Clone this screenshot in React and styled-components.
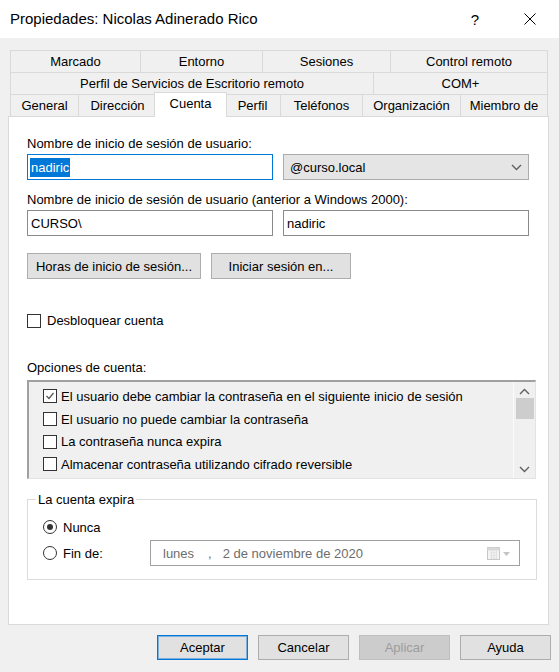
import React from "react";
import styled, { createGlobalStyle } from "styled-components";

const GlobalStyle = createGlobalStyle`
  html, body {
    margin: 0;
    padding: 0;
    background: #f0f0f0;
  }
  body {
    font-family: "Liberation Sans", Arial, sans-serif;
    font-size: 13px;
    color: #000;
  }
`;

const Window = styled.div`
  width: 559px;
  height: 672px;
  display: flex;
  flex-direction: column;
  background: #f0f0f0;
  overflow: hidden;
`;

const TitleBar = styled.div`
  height: 38px;
  flex-shrink: 0;
  background: #fff;
  display: flex;
  align-items: center;
  padding-right: 6px;
`;

const Title = styled.div`
  flex: 1;
  padding-left: 10px;
  font-size: 15px;
  line-height: 18px;
`;

const CaptionButton = styled.div`
  width: 46px;
  height: 38px;
  display: flex;
  align-items: center;
  justify-content: center;
  font-size: 15px;
  margin-right: ${({ $gap }) => $gap || 0}px;
`;

const Body = styled.div`
  flex: 1;
  display: flex;
  flex-direction: column;
  padding: 12px 8px 0 8px;
`;

const TabRow = styled.div`
  display: grid;
  grid-template-columns: ${({ $cols }) => $cols};
  height: 22px;
  margin: 0 4px 0 2px;
  border-left: 1px solid #d9d9d9;
`;

const Tab = styled.div`
  display: flex;
  align-items: center;
  justify-content: center;
  border-top: 1px solid #d9d9d9;
  border-right: 1px solid #d9d9d9;
  background: ${({ $active }) => ($active ? "#fff" : "#f0f0f0")};
  line-height: 15px;
  white-space: nowrap;
  ${({ $active }) =>
    $active &&
    `
    margin: -2px -2px -1px -3px;
    border-left: 1px solid #d9d9d9;
    padding-bottom: 3px;
    z-index: 1;
  `}
`;

const Panel = styled.div`
  box-sizing: border-box;
  height: 509px;
  margin-right: 2px;
  background: #fff;
  border: 1px solid #d9d9d9;
  padding: 0 19px 0 18px;
  display: flex;
  flex-direction: column;
`;

const Label = styled.div`
  line-height: 15px;
  margin-top: ${({ $mt }) => $mt}px;
  margin-bottom: ${({ $mb }) => $mb || 0}px;
`;

const FieldRow = styled.div`
  display: grid;
  grid-template-columns: 246px 246px;
  column-gap: 10px;
`;

const TextBox = styled.div`
  box-sizing: border-box;
  height: 26px;
  border: 1px solid ${({ $focused }) => ($focused ? "#0078d7" : "#8a8a8a")};
  background: #fff;
  display: flex;
  align-items: center;
  padding-left: 2px;
`;

const Selected = styled.span`
  background: #0078d7;
  color: #fff;
  line-height: 19px;
  padding: 0 1px;
`;

const Combo = styled.div`
  box-sizing: border-box;
  height: 26px;
  border: 1px solid #acacac;
  background: #e5e5e5;
  display: flex;
  align-items: center;
  justify-content: space-between;
  padding: 0 6px 0 6px;
`;

const ButtonRow = styled.div`
  display: flex;
  gap: 10px;
  margin-top: ${({ $mt }) => $mt || 0}px;
  justify-content: ${({ $end }) => ($end ? "flex-end" : "flex-start")};
`;

const Button = styled.div`
  box-sizing: border-box;
  width: ${({ $w }) => $w}px;
  height: ${({ $h }) => $h || 26}px;
  display: flex;
  align-items: center;
  justify-content: center;
  background: ${({ $disabled }) => ($disabled ? "#cccccc" : "#e1e1e1")};
  border: 1px solid
    ${({ $default, $disabled }) =>
      $default ? "#0078d7" : $disabled ? "#bfbfbf" : "#adadad"};
  box-shadow: ${({ $default }) =>
    $default ? "inset 0 0 0 1px rgba(0,120,215,0.45)" : "none"};
  color: ${({ $disabled }) => ($disabled ? "#9d9d9d" : "#000")};
`;

const CheckRow = styled.div`
  display: flex;
  align-items: center;
  gap: ${({ $gap }) => $gap || 6}px;
  height: ${({ $h }) => $h || 15}px;
  line-height: 15px;
  margin-top: ${({ $mt }) => $mt || 0}px;
  white-space: nowrap;
`;

const Box = styled.div`
  box-sizing: border-box;
  width: 14px;
  height: 14px;
  flex-shrink: 0;
  border: 1px solid #333;
  background: #fff;
  display: flex;
  align-items: center;
  justify-content: center;
`;

const ListBox = styled.div`
  box-sizing: border-box;
  width: 509px;
  height: 99px;
  margin-top: 5px;
  display: flex;
  background: #f0f0f0;
  border-top: 2px solid #a0a0a0;
  border-left: 2px solid #a0a0a0;
  border-right: 1px solid #e3e3e3;
  border-bottom: 1px solid #e3e3e3;
`;

const ListItems = styled.div`
  flex: 1;
  padding: 3px 0 0 14px;
  overflow: hidden;
`;

const ListItem = styled(CheckRow)`
  height: 22.7px;
  gap: 4px;
`;

const ScrollBar = styled.div`
  width: 21px;
  border-left: 1px solid #fbfbfb;
  display: flex;
  flex-direction: column;
  align-items: center;
  justify-content: space-between;
  padding: 6px 0 5px;
`;

const Thumb = styled.div`
  width: 18px;
  height: 21px;
  background: #cdcdcd;
  margin-bottom: auto;
  margin-top: 3px;
`;

const Group = styled.fieldset`
  box-sizing: border-box;
  width: 510px;
  margin: 13px 0 0 0;
  padding: 10px 0 13px 15px;
  border: 1px solid #dcdcdc;
  min-width: 0;
`;

const Legend = styled.legend`
  padding: 0 2px;
  margin-left: -7px;
  line-height: 15px;
`;

const ExpiryRow = styled.div`
  display: grid;
  grid-template-columns: 107px 370px;
  align-items: center;
  height: ${({ $h }) => $h}px;
  margin-top: ${({ $mt }) => $mt || 0}px;
`;

const Radio = styled.div`
  box-sizing: border-box;
  width: 14px;
  height: 14px;
  border-radius: 50%;
  border: 1px solid #333;
  background: #fff;
  display: flex;
  align-items: center;
  justify-content: center;
  &::after {
    content: "";
    width: 6px;
    height: 6px;
    border-radius: 50%;
    background: ${({ $checked }) => ($checked ? "#333" : "transparent")};
  }
`;

const DatePicker = styled.div`
  box-sizing: border-box;
  height: 26px;
  border: 1px solid #a0a0a0;
  background: #fff;
  display: flex;
  align-items: center;
  padding: 0 8px 0 12px;
  color: #6d6d6d;
`;

const DatePart = styled.span`
  margin-right: ${({ $mr }) => $mr || 0}px;
`;

const Spacer = styled.div`
  flex: 1;
`;

const Chevron = ({ up }) => (
  <svg width="11" height="7" viewBox="0 0 11 7">
    <polyline
      points={up ? "1,6 5.5,1.5 10,6" : "1,1 5.5,5.5 10,1"}
      fill="none"
      stroke="#606060"
      strokeWidth="1.4"
    />
  </svg>
);

const CheckMark = () => (
  <svg width="10" height="10" viewBox="0 0 10 10">
    <polyline points="1.5,5 4,7.5 8.5,2" fill="none" stroke="#555" strokeWidth="1.2" />
  </svg>
);

const CalendarIcon = () => (
  <svg width="24" height="13" viewBox="0 0 24 13">
    <rect x="0.5" y="0.5" width="12" height="12" fill="#f4f4f4" stroke="#c8c8c8" />
    <rect x="0.5" y="0.5" width="12" height="3" fill="#d8d8d8" />
    <path d="M3 6h7M3 8.5h7M3 11h7M4.5 4v8M7 4v8M9.5 4v8" stroke="#dedede" strokeWidth="0.8" />
    <polygon points="16,5 23,5 19.5,9" fill="#c4c4c4" />
  </svg>
);

const tabRows = [
  { cols: "130px 122px 128px 157px", tabs: ["Marcado", "Entorno", "Sesiones", "Control remoto"] },
  { cols: "363px 174px", tabs: ["Perfil de Servicios de Escritorio remoto", "COM+"] },
  {
    cols: "68px 78px 68px 56px 82px 98px 87px",
    tabs: ["General", "Dirección", "Cuenta", "Perfil", "Teléfonos", "Organización", "Miembro de"],
  },
];

const accountOptions = [
  { text: "El usuario debe cambiar la contraseña en el siguiente inicio de sesión", checked: true },
  { text: "El usuario no puede cambiar la contraseña" },
  { text: "La contraseña nunca expira" },
  { text: "Almacenar contraseña utilizando cifrado reversible" },
];

const App = () => {
  return (
    <Window>
      <GlobalStyle />
      <TitleBar>
        <Title>Propiedades: Nicolas Adinerado Rico</Title>
        <CaptionButton $gap={9}>?</CaptionButton>
        <CaptionButton>
          <svg width="12" height="12" viewBox="0 0 12 12">
            <path d="M0.5 0.5L11.5 11.5M11.5 0.5L0.5 11.5" stroke="#000" strokeWidth="1" />
          </svg>
        </CaptionButton>
      </TitleBar>

      <Body>
        {tabRows.map((row, i) => (
          <TabRow key={i} $cols={row.cols}>
            {row.tabs.map((t) => (
              <Tab key={t} $active={t === "Cuenta"}>
                {t}
              </Tab>
            ))}
          </TabRow>
        ))}

        <Panel>
          <Label $mt={19} $mb={3}>Nombre de inicio de sesión de usuario:</Label>
          <FieldRow>
            <TextBox $focused>
              <Selected>nadiric</Selected>
            </TextBox>
            <Combo>
              <span>@curso.local</span>
              <Chevron />
            </Combo>
          </FieldRow>

          <Label $mt={12} $mb={3}>
            Nombre de inicio de sesión de usuario (anterior a Windows 2000):
          </Label>
          <FieldRow>
            <TextBox>
              <span style={{ paddingLeft: 1 }}>CURSO\</span>
            </TextBox>
            <TextBox>
              <span style={{ paddingLeft: 1 }}>nadiric</span>
            </TextBox>
          </FieldRow>

          <ButtonRow $mt={17}>
            <Button $w={174}>Horas de inicio de sesión...</Button>
            <Button $w={140}>Iniciar sesión en...</Button>
          </ButtonRow>

          <CheckRow $mt={34}>
            <Box />
            <span>Desbloquear cuenta</span>
          </CheckRow>

          <Label $mt={32}>Opciones de cuenta:</Label>
          <ListBox>
            <ListItems>
              {accountOptions.map((o) => (
                <ListItem key={o.text}>
                  <Box>{o.checked && <CheckMark />}</Box>
                  <span>{o.text}</span>
                </ListItem>
              ))}
            </ListItems>
            <ScrollBar>
              <Chevron up />
              <Thumb />
              <Chevron />
            </ScrollBar>
          </ListBox>

          <Group>
            <Legend>La cuenta expira</Legend>
            <ExpiryRow $h={20}>
              <CheckRow>
                <Radio $checked />
                <span>Nunca</span>
              </CheckRow>
            </ExpiryRow>
            <ExpiryRow $h={26} $mt={3}>
              <CheckRow>
                <Radio />
                <span>Fin de:</span>
              </CheckRow>
              <DatePicker>
                <DatePart $mr={14}>lunes</DatePart>
                <DatePart $mr={11}>,</DatePart>
                <DatePart>2 de noviembre de 2020</DatePart>
                <Spacer />
                <CalendarIcon />
              </DatePicker>
            </ExpiryRow>
          </Group>
        </Panel>

        <ButtonRow $mt={10} $end>
          <Button $w={91} $h={25} $default>Aceptar</Button>
          <Button $w={91} $h={25}>Cancelar</Button>
          <Button $w={91} $h={25} $disabled>Aplicar</Button>
          <Button $w={91} $h={25}>Ayuda</Button>
        </ButtonRow>
      </Body>
    </Window>
  );
};

export default App;
